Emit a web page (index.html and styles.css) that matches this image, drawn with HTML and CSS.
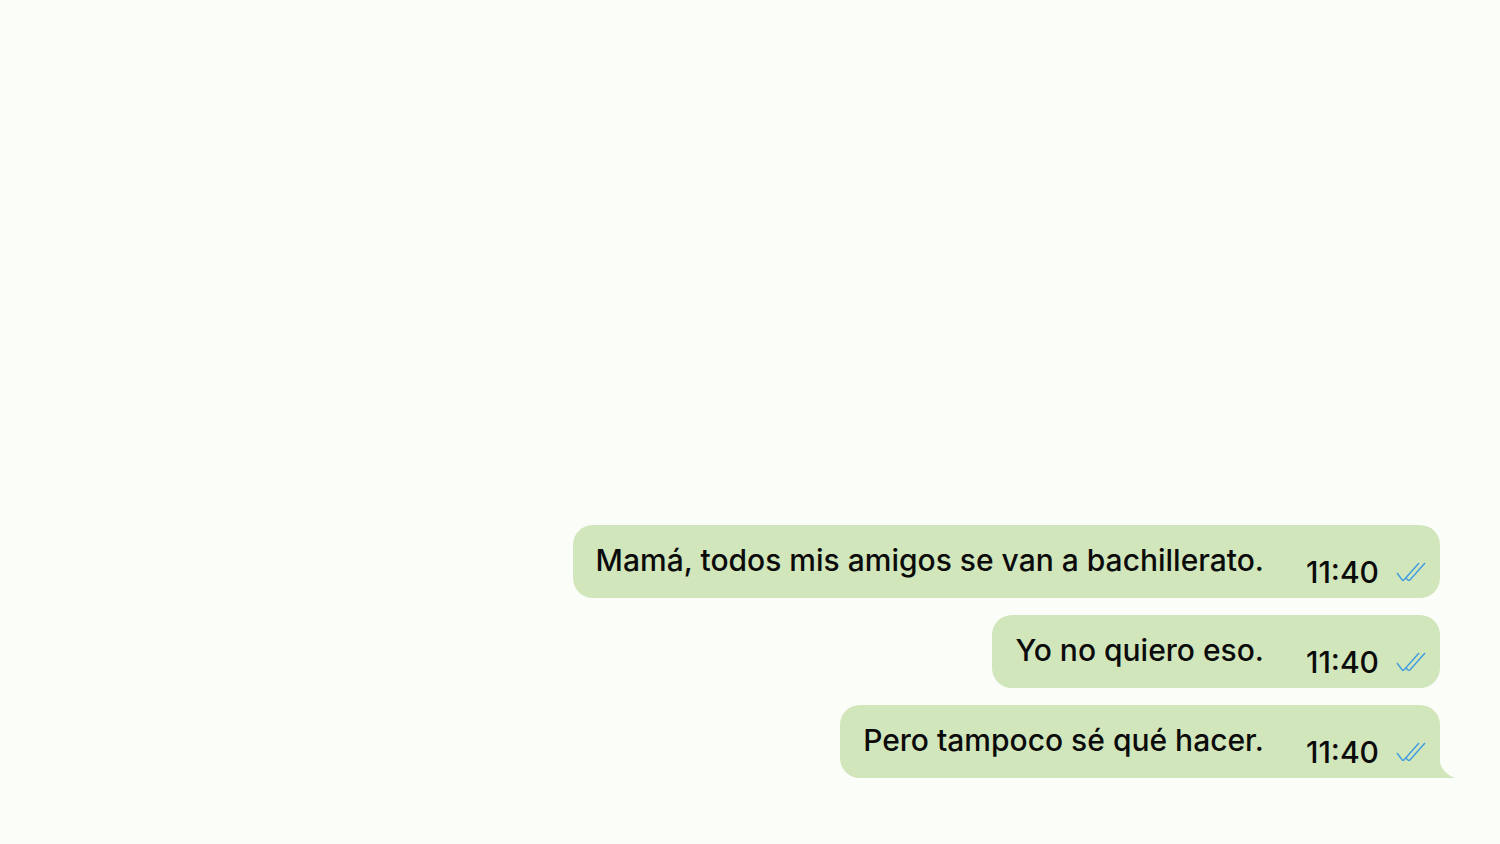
FILE: index.html
```html
<!DOCTYPE html>
<html lang="es">
<head>
<meta charset="UTF-8" />
<meta name="viewport" content="width=device-width, initial-scale=1" />
<title>Chat</title>
<link rel="stylesheet" href="styles.css">
</head>
<body>

<div class="chat">
  <div class="bubble">
    <span class="text">Mamá, todos mis amigos se van a bachillerato.</span>
    <span class="meta">11:40
      <svg class="ticks" width="30" height="20" viewBox="0 0 30 20"><path d="M1 12 L7 20 L23 2 M10 17 L13 20 L29 2" /></svg>
    </span>
  </div>
  <div class="bubble">
    <span class="text">Yo no quiero eso.</span>
    <span class="meta">11:40
      <svg class="ticks" width="30" height="20" viewBox="0 0 30 20"><path d="M1 12 L7 20 L23 2 M10 17 L13 20 L29 2" /></svg>
    </span>
  </div>
  <div class="bubble last">
    <span class="text">Pero tampoco sé qué hacer.</span>
    <span class="meta">11:40
      <svg class="ticks" width="30" height="20" viewBox="0 0 30 20"><path d="M1 12 L7 20 L23 2 M10 17 L13 20 L29 2" /></svg>
    </span>
    <svg class="tail" width="16" height="26" viewBox="0 0 16 26"><path d="M0 0 L0 4 C0 14 6 22 16 26 L0 26 Z" /></svg>
  </div>
</div>

</body>
</html>
```

FILE: styles.css
```css
html, body {
  margin: 0;
  height: 100%;
}
body {
  background: #fbfdf9;
  font-family: Inter, 'Noto Sans', sans-serif;
  color: #0b0b0b;
}
.chat {
  height: 100%;
  box-sizing: border-box;
  display: flex;
  flex-direction: column;
  justify-content: flex-end;
  align-items: flex-end;
  gap: 17px;
  padding: 0 60px 66px 0;
}
.bubble {
  position: relative;
  display: flex;
  align-items: flex-start;
  height: 73px;
  box-sizing: border-box;
  padding: 17px 14px 0 23px;
  background: #d1e6bb;
  border-radius: 20px;
  font-size: 30px;
  font-weight: 500;
  line-height: 36px;
}
.bubble.last {
  border-bottom-right-radius: 0;
}
.text {
  white-space: nowrap;
}
.meta {
  display: flex;
  align-items: flex-start;
  margin: 12px 0 0 42px;
  white-space: nowrap;
}
.ticks {
  margin: 7px 0 0 17px;
  fill: none;
  stroke: #3f9be0;
  stroke-width: 1.4;
}
.tail {
  position: absolute;
  right: -15px;
  bottom: 0;
  fill: #d1e6bb;
}
```
